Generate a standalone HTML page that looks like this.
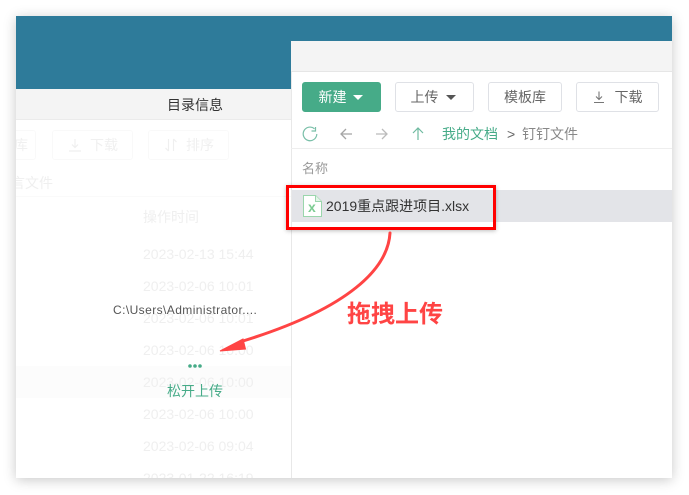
<!DOCTYPE html>
<html>
<head>
<meta charset="utf-8">
<style>
html,body{margin:0;padding:0;background:#fff}
#p{position:relative;width:689px;height:495px;overflow:hidden;background:#fff;font-family:"Liberation Sans","Noto Sans CJK SC",sans-serif}
#card{position:absolute;left:16px;top:16px;width:656px;height:462px;background:#fff;overflow:hidden;box-shadow:0 2px 12px rgba(0,0,0,.22)}
.a{position:absolute;white-space:nowrap}
.t{position:absolute;left:143px;font-size:14px;line-height:16px;color:#efefef;white-space:nowrap}
.b{position:absolute;box-sizing:border-box;height:30px;top:82px;border:1px solid #dfe1e6;border-radius:3px;background:#fff;color:#666;font-size:14px;line-height:28px;text-align:center;white-space:nowrap}
.lb{position:absolute;box-sizing:border-box;height:30px;top:130px;border:1px solid #f9f9f9;border-radius:3px;color:#f0f0f0;font-size:14px;line-height:28px;white-space:nowrap}
</style>
</head>
<body>
<div id="p">
<div id="card"></div>
<div class="a" style="left:16px;top:16px;width:656px;height:73px;background:#2e7b9a"></div>
<div class="a" style="left:16px;top:89px;width:275px;height:30px;background:#f4f4f4;border-bottom:1px solid #ebebeb"></div>
<div class="a" style="left:167px;top:96px;font-size:14px;line-height:18px;color:#333">目录信息</div>

<div class="a" style="left:16px;top:130px;width:21px;height:30px;overflow:hidden">
  <div class="lb" style="left:-40px;top:0;width:60px;padding-left:9px">文件库</div>
</div>
<div class="lb" style="left:52px;width:81px;padding-left:37px">下载</div>
<svg class="a" style="left:68px;top:138px" width="14" height="14" viewBox="0 0 14 14" fill="none" stroke="#efefef" stroke-width="1.200"><path d="M7 1v8M4 6.500l3 3 3-3M1 13h12"/></svg>
<div class="lb" style="left:148px;width:81px;padding-left:37px">排序</div>
<svg class="a" style="left:164px;top:138px" width="14" height="14" viewBox="0 0 14 14" fill="none" stroke="#efefef" stroke-width="1.200"><path d="M4.500 1v12M1.500 10l3 3M9.500 13V1M9.500 1l3 3"/></svg>
<div class="a" style="left:16px;top:174px;width:37px;height:18px;overflow:hidden"><div class="a" style="right:0;top:0;font-size:14px;line-height:18px;color:#efefef">言文件</div></div>
<div class="a" style="left:16px;top:196px;width:275px;height:1px;background:#fafafa"></div>
<div class="t" style="top:209px">操作时间</div>
<div class="a" style="left:16px;top:366px;width:275px;height:32px;background:#fcfcfc"></div>
<div class="t" style="top:246px">2023-02-13 15:44</div>
<div class="t" style="top:278px">2023-02-06 10:01</div>
<div class="t" style="top:310px">2023-02-06 10:01</div>
<div class="t" style="top:342px">2023-02-06 10:00</div>
<div class="t" style="top:374px">2023-02-06 10:00</div>
<div class="t" style="top:406px">2023-02-06 10:00</div>
<div class="t" style="top:438px">2023-02-06 09:04</div>
<div class="a" style="left:143px;top:470px;height:8px;overflow:hidden;font-size:14px;line-height:16px;color:#efefef">2023-01-22 16:19</div>
<div class="a" style="left:113px;top:302px;font-size:12px;line-height:16px;color:#555;letter-spacing:.42px">C:\Users\Administrator....</div>
<svg class="a" style="left:186px;top:362px" width="18" height="8" viewBox="0 0 18 8" fill="#46ab88"><circle cx="4" cy="4" r="1.800"/><circle cx="9" cy="4" r="1.800"/><circle cx="14" cy="4" r="1.800"/></svg>
<div class="a" style="left:167px;top:382px;font-size:14px;line-height:18px;color:#46ab88">松开上传</div>

<div class="a" style="left:291px;top:41px;width:381px;height:437px;background:#fff;border-left:1px solid #e8e8e8;box-sizing:border-box"></div>
<div class="a" style="left:291px;top:41px;width:381px;height:30px;background:#f4f4f4;border-bottom:1px solid #e6e6e6"></div>
<div class="b" style="left:302px;width:79px;background:#46ab88;border-color:#46ab88;color:#fff;padding-right:18px">新建</div>
<div class="a" style="left:353px;top:95px;width:0;height:0;border-left:5px solid transparent;border-right:5px solid transparent;border-top:5px solid #fff"></div>
<div class="b" style="left:395px;width:79px;padding-right:20px">上传</div>
<div class="a" style="left:446px;top:95px;width:0;height:0;border-left:5px solid transparent;border-right:5px solid transparent;border-top:5px solid #555"></div>
<div class="b" style="left:488px;width:74px">模板库</div>
<div class="b" style="left:576px;width:83px;padding-left:22px">下载</div>
<svg class="a" style="left:592px;top:90px" width="14" height="14" viewBox="0 0 14 14" fill="none" stroke="#777" stroke-width="1.100"><path d="M7 1.500v8M4 6.500l3 3 3-3M2 12.500h10"/></svg>

<svg class="a" style="left:302px;top:126px" width="16" height="16" viewBox="0 0 16 16" fill="none" stroke-width="1.200"><path d="M12.500 2.800A6.800 6.800 0 1 0 14.800 8" stroke="#79bfa8"/><path d="M13.500 1v4h-4" stroke="#79bfa8"/></svg>
<svg class="a" style="left:339px;top:127px" width="15" height="14" viewBox="0 0 15 14" fill="none" stroke="#a5a5a5" stroke-width="1.300"><path d="M13 7H2M7 2 2 7l5 5"/></svg>
<svg class="a" style="left:374px;top:127px" width="15" height="14" viewBox="0 0 15 14" fill="none" stroke="#bbb" stroke-width="1.300"><path d="M2 7h11M8 2l5 5-5 5"/></svg>
<svg class="a" style="left:411px;top:126px" width="14" height="15" viewBox="0 0 14 15" fill="none" stroke="#6fbaa0" stroke-width="1.200"><path d="M7 14V2M2 7l5-5 5 5"/></svg>
<div class="a" style="left:442px;top:125px;font-size:14px;line-height:18px;color:#46ab88">我的文档</div>
<div class="a" style="left:507px;top:125px;font-size:14px;line-height:18px;color:#666">&gt;</div>
<div class="a" style="left:522px;top:125px;font-size:14px;line-height:18px;color:#888">钉钉文件</div>
<div class="a" style="left:291px;top:148px;width:381px;height:1px;background:#eee"></div>
<div class="a" style="left:302px;top:160px;font-size:13px;line-height:18px;color:#999">名称</div>

<div class="a" style="left:292px;top:190px;width:380px;height:32px;background:#e3e4e8"></div>
<svg class="a" style="left:303px;top:195px" width="19" height="22" viewBox="0 0 19 22"><path d="M.500.500H12.500L18.500 6.500V21.500H.500Z" fill="#fff" stroke="#9ad6ac"/><path d="M12.500.500V6.500H18.500" fill="#e3f4e8" stroke="#9ad6ac"/><text x="5" y="17" font-family="Liberation Sans" font-size="14" font-weight="700" fill="#7ccb92">x</text></svg>
<div class="a" style="left:326px;top:196px;font-size:14px;line-height:20px;color:#333">2019重点跟进项目.xlsx</div>
<div class="a" style="left:286px;top:185px;width:204px;height:39px;border:3px solid #f00;box-shadow:0 1px 4px rgba(0,0,0,.25)"></div>

<svg class="a" style="left:0;top:0" width="689" height="495" viewBox="0 0 689 495" fill="none"><path d="M390 233C388 268 350 308 243 341" stroke="#ff4444" stroke-width="3" stroke-linecap="round"/><path d="M220 351L243 339L245.500 349Z" fill="#ff4444" stroke="#ff4444" stroke-width="1"/></svg>
<div class="a" style="left:347px;top:300px;font-size:24px;line-height:30px;font-weight:700;color:#ff4444">拖拽上传</div>
</div>
</body>
</html>
